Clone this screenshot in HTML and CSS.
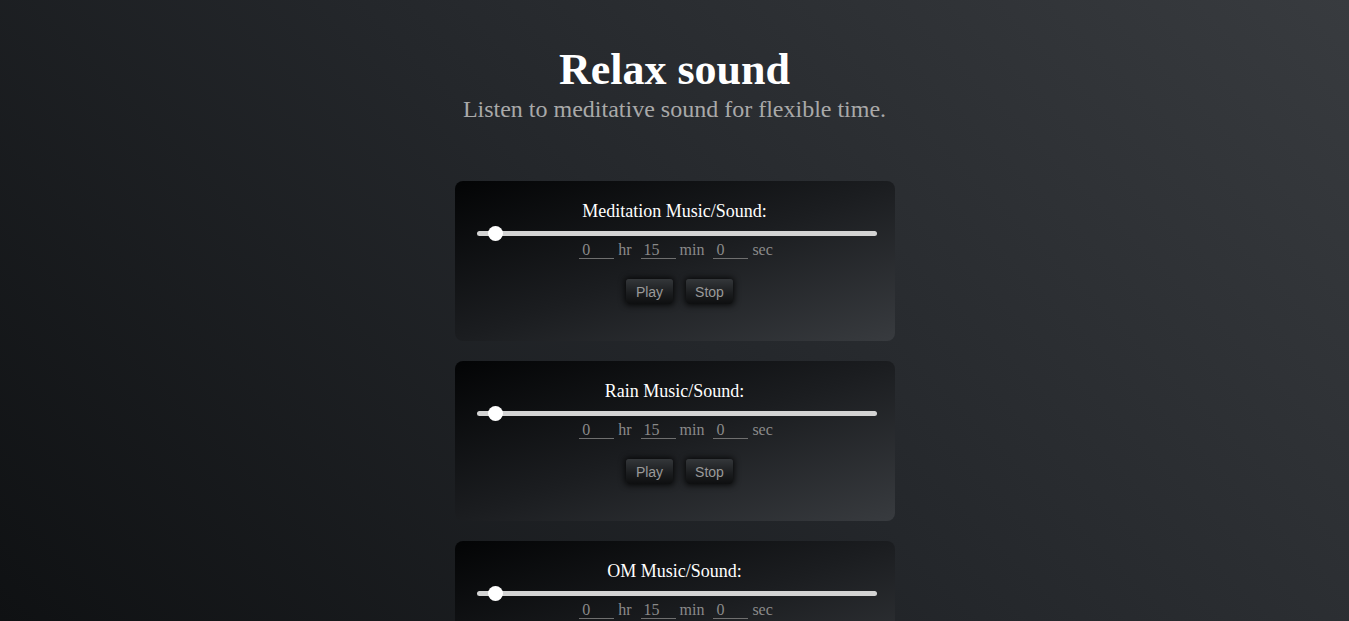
FILE: index.html
```html
<!DOCTYPE html>
<html lang="en">
<head>
<meta charset="utf-8">
<title>Relax sound</title>
<link rel="stylesheet" href="styles.css">
</head>
<body>
<header class="hero">
  <h1 class="hero-title">Relax sound</h1>
  <p class="hero-sub">Listen to meditative sound for flexible time.</p>
</header>
<main class="list">
  <section class="card">
    <h2 class="card-title">Meditation Music/Sound:</h2>
    <input class="slider" type="range" min="0" max="500" value="15">
    <div class="time">
      <input class="num" type="text" value="0"><span class="unit">hr</span>
      <input class="num" type="text" value="15"><span class="unit">min</span>
      <input class="num" type="text" value="0"><span class="unit">sec</span>
    </div>
    <div class="actions">
      <button class="btn">Play</button>
      <button class="btn">Stop</button>
    </div>
  </section>
  <section class="card">
    <h2 class="card-title">Rain Music/Sound:</h2>
    <input class="slider" type="range" min="0" max="500" value="15">
    <div class="time">
      <input class="num" type="text" value="0"><span class="unit">hr</span>
      <input class="num" type="text" value="15"><span class="unit">min</span>
      <input class="num" type="text" value="0"><span class="unit">sec</span>
    </div>
    <div class="actions">
      <button class="btn">Play</button>
      <button class="btn">Stop</button>
    </div>
  </section>
  <section class="card">
    <h2 class="card-title">OM Music/Sound:</h2>
    <input class="slider" type="range" min="0" max="500" value="15">
    <div class="time">
      <input class="num" type="text" value="0"><span class="unit">hr</span>
      <input class="num" type="text" value="15"><span class="unit">min</span>
      <input class="num" type="text" value="0"><span class="unit">sec</span>
    </div>
    <div class="actions">
      <button class="btn">Play</button>
      <button class="btn">Stop</button>
    </div>
  </section>
</main>
</body>
</html>
```
FILE: styles.css
```css
html, body {
  margin: 0;
  padding: 0;
  height: 100%;
}
body {
  background: linear-gradient(45deg, #0f1113 0%, #24272b 50%, #383b3f 100%);
  background-attachment: fixed;
  font-family: "Liberation Serif", "Times New Roman", serif;
  color: #fff;
  overflow: hidden;
}
.hero {
  padding-top: 45px;
  text-align: center;
}
.hero-title {
  margin: 0;
  font-size: 44px;
  line-height: 49px;
  font-weight: bold;
  color: #fff;
}
.hero-sub {
  margin: 2px 0 0;
  font-size: 24px;
  line-height: 27px;
  color: #a9a9a9;
}
.list {
  display: flex;
  flex-direction: column;
  align-items: center;
  gap: 20px;
  margin-top: 58px;
}
.card {
  width: 440px;
  height: 160px;
  box-sizing: border-box;
  padding: 20px 20px 0;
  border-radius: 8px;
  background: linear-gradient(160deg, #030405 0%, #1b1d20 50%, #383b3f 100%);
  display: flex;
  flex-direction: column;
  align-items: center;
}
.card-title {
  margin: 0;
  font-size: 18px;
  line-height: 20px;
  font-weight: normal;
  color: #fff;
}
.slider {
  -webkit-appearance: none;
  appearance: none;
  width: 400px;
  height: 16px;
  margin: 4px 0 0 4px;
  background: transparent;
}
.slider::-webkit-slider-runnable-track {
  height: 5px;
  border-radius: 3px;
  background: #d3d3d3;
}
.slider::-webkit-slider-thumb {
  -webkit-appearance: none;
  appearance: none;
  width: 15px;
  height: 15px;
  margin-top: -5px;
  border-radius: 50%;
  background: #fff;
}
.time {
  display: flex;
  align-items: center;
  height: 18px;
  font-size: 16px;
  color: #8a8a8a;
  padding-left: 12px;
}
.num {
  width: 35px;
  box-sizing: border-box;
  height: 18px;
  padding: 0 0 0 3px;
  border: none;
  border-bottom: 1px solid #6f6f6f;
  background: transparent;
  color: #8a8a8a;
  font-family: "Liberation Serif", "Times New Roman", serif;
  font-size: 16px;
  outline: none;
}
.unit {
  margin: 0 9px 0 4px;
}
.actions {
  display: flex;
  gap: 13px;
  margin-top: 20px;
  padding-left: 10px;
}
.btn {
  height: 25px;
  width: 47px;
  padding: 0;
  border: none;
  border-radius: 3px;
  background: linear-gradient(180deg, #34373a 0%, #1a1c1e 60%, #0e0f10 100%);
  color: #999;
  font-family: "Liberation Sans", Arial, sans-serif;
  font-size: 14px;
  box-shadow: 0 0 6px 1px rgba(0, 0, 0, 0.85);
}
```
